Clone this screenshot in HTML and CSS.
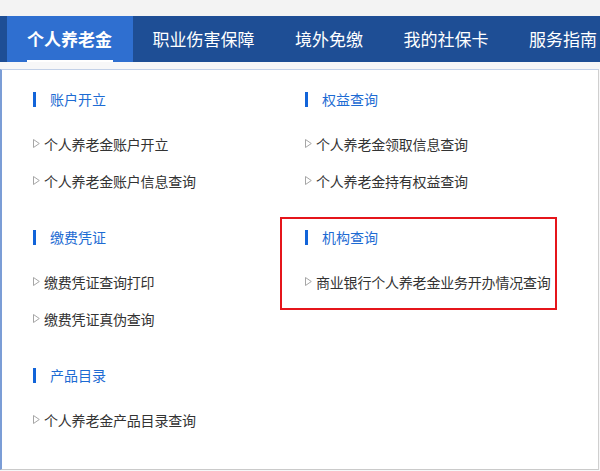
FILE: index.html
```html
<!DOCTYPE html>
<html lang="zh-CN">
<head>
  <meta charset="UTF-8">
  <title>个人养老金</title>
  <meta name="viewport" content="width=device-width, initial-scale=1.0">
  <link rel="stylesheet" href="styles.css">
</head>
<body>

  <!-- Top strip -->
  <div class="topbar"></div>

  <!-- Main nav -->
  <nav class="mainnav">
    <a href="#" class="active">个人养老金</a>
    <a href="#">职业伤害保障</a>
    <a href="#">境外免缴</a>
    <a href="#">我的社保卡</a>
    <a href="#">服务指南</a>
  </nav>

  <!-- Dropdown panel -->
  <div class="panel">
    <div class="col">
      <div class="group">
        <h3>账户开立</h3>
        <ul>
          <li><svg class="arrow" width="7" height="9" viewBox="0 0 7 9"><polygon points="0.5,0.5 6.3,4.5 0.5,8.5" /></svg>个人养老金账户开立</li>
          <li><svg class="arrow" width="7" height="9" viewBox="0 0 7 9"><polygon points="0.5,0.5 6.3,4.5 0.5,8.5" /></svg>个人养老金账户信息查询</li>
        </ul>
      </div>
      <div class="group">
        <h3>缴费凭证</h3>
        <ul>
          <li><svg class="arrow" width="7" height="9" viewBox="0 0 7 9"><polygon points="0.5,0.5 6.3,4.5 0.5,8.5" /></svg>缴费凭证查询打印</li>
          <li><svg class="arrow" width="7" height="9" viewBox="0 0 7 9"><polygon points="0.5,0.5 6.3,4.5 0.5,8.5" /></svg>缴费凭证真伪查询</li>
        </ul>
      </div>
      <div class="group">
        <h3>产品目录</h3>
        <ul>
          <li><svg class="arrow" width="7" height="9" viewBox="0 0 7 9"><polygon points="0.5,0.5 6.3,4.5 0.5,8.5" /></svg>个人养老金产品目录查询</li>
        </ul>
      </div>
    </div>

    <div class="col">
      <div class="group">
        <h3>权益查询</h3>
        <ul>
          <li><svg class="arrow" width="7" height="9" viewBox="0 0 7 9"><polygon points="0.5,0.5 6.3,4.5 0.5,8.5" /></svg>个人养老金领取信息查询</li>
          <li><svg class="arrow" width="7" height="9" viewBox="0 0 7 9"><polygon points="0.5,0.5 6.3,4.5 0.5,8.5" /></svg>个人养老金持有权益查询</li>
        </ul>
      </div>
      <div class="group marked">
        <h3>机构查询</h3>
        <ul>
          <li><svg class="arrow" width="7" height="9" viewBox="0 0 7 9"><polygon points="0.5,0.5 6.3,4.5 0.5,8.5" /></svg>商业银行个人养老金业务开办情况查询</li>
        </ul>
      </div>
    </div>
  </div>

</body>
</html>
```

FILE: styles.css
```css
* {
  margin: 0;
  padding: 0;
  box-sizing: border-box;
}

body {
  font-family: "Noto Sans CJK SC", "Noto Sans", sans-serif;
  background: #f7f7f8;
  color: #333;
  overflow: hidden;
}

.topbar {
  height: 16px;
  background: #f3f3f3;
}

.mainnav {
  display: flex;
  height: 46px;
  padding-left: 7px;
  background: #1e4e95;
  white-space: nowrap;
}

.mainnav a {
  position: relative;
  padding: 0 20.5px 0 20px;
  line-height: 46px;
  font-size: 17px;
  color: #fff;
  text-decoration: none;
}

.mainnav a.active {
  background: #2f6fd0;
  font-weight: bold;
}

.mainnav a.active::after {
  content: "";
  position: absolute;
  left: 20px;
  right: 20px;
  bottom: 0;
  height: 2px;
  background: #fff;
}

.panel {
  display: grid;
  grid-template-columns: 272px 272px;
  align-items: start;
  width: 599px;
  height: 401px;
  margin-top: 7px;
  padding: 19px 0 0 31px;
  background: #fff;
  border-top: 1px solid #c3d1e8;
  border-left: 2px solid #7b9dd6;
  border-right: 1px solid #cfcfcf;
  border-bottom: 1px solid #cacaca;
  overflow: hidden;
}

.group {
  position: relative;
  margin-bottom: 28px;
}

.group h3 {
  display: flex;
  align-items: center;
  height: 20px;
  margin-bottom: 16px;
  font-size: 14px;
  font-weight: normal;
  color: #1d6bd3;
}

.group h3::before {
  content: "";
  width: 3px;
  height: 15px;
  margin-right: 14px;
  background: #1264d9;
}

.group ul {
  list-style: none;
}

.group li {
  display: flex;
  align-items: center;
  height: 37px;
  font-size: 14px;
  letter-spacing: -0.2px;
  color: #333;
  white-space: nowrap;
}

.arrow {
  margin-right: 4px;
  fill: none;
  stroke: #a6a6a6;
  stroke-width: 1;
}

/* annotation box */
.group.marked::after {
  content: "";
  position: absolute;
  top: -10px;
  left: -25px;
  width: 273px;
  bottom: -10px;
  border: 2px solid #e5151b;
  pointer-events: none;
}
```
